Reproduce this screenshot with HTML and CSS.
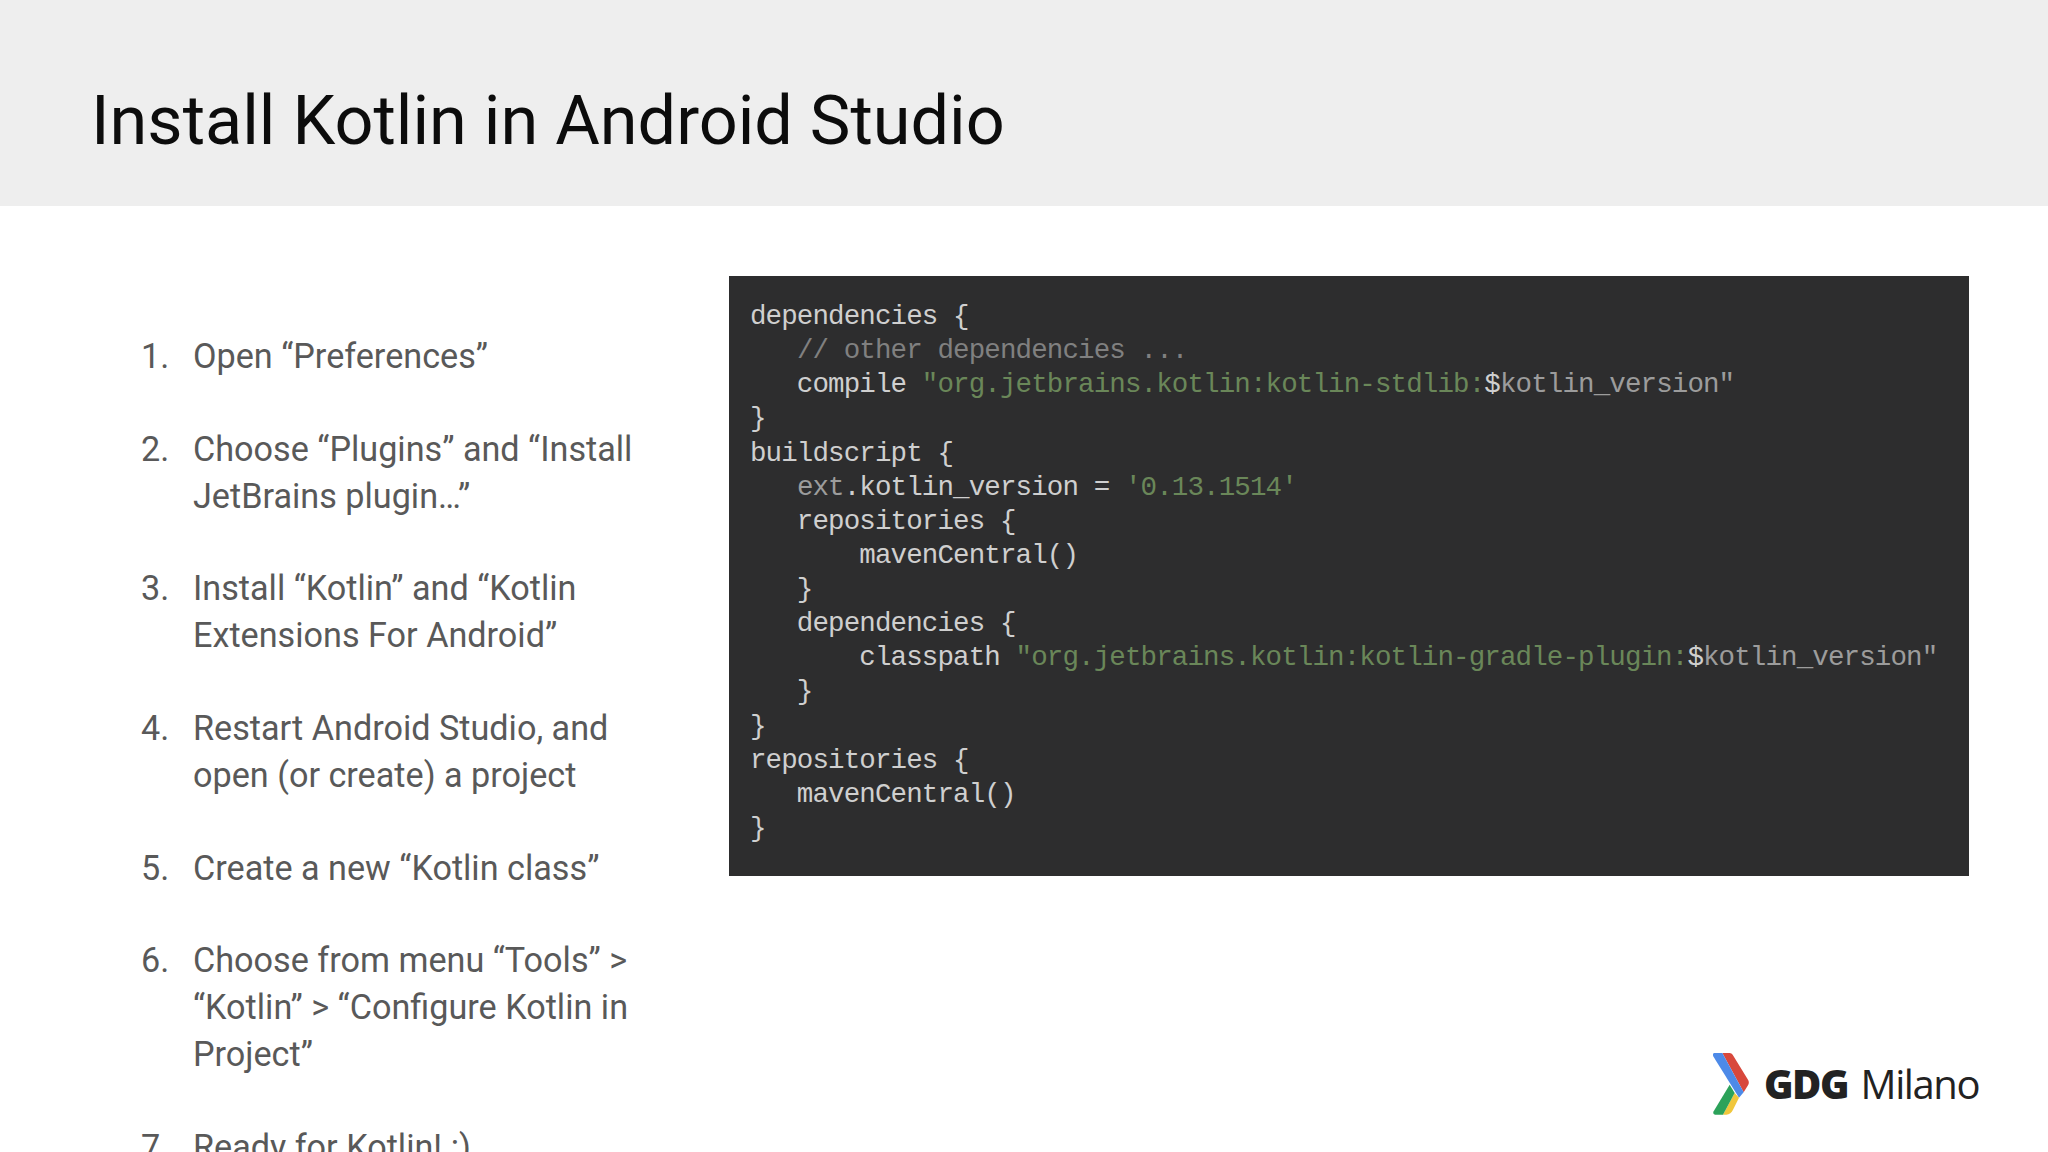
FILE: index.html
```html
<!DOCTYPE html>
<html lang="en">
<head>
  <meta charset="UTF-8">
  <meta name="viewport" content="width=device-width, initial-scale=1.0">
  <title>Install Kotlin in Android Studio</title>
  <link rel="stylesheet" href="styles.css">
</head>
<body>
  <header class="slide-header">
    <h1>Install Kotlin in Android Studio</h1>
  </header>
  <main class="slide-body">
    <ol class="steps">
      <li><span>Open “Preferences”</span></li>
      <li><span>Choose “Plugins” and “Install JetBrains plugin…”</span></li>
      <li><span>Install “Kotlin” and “Kotlin Extensions For Android”</span></li>
      <li><span>Restart Android Studio, and open (or create) a project</span></li>
      <li><span>Create a new “Kotlin class”</span></li>
      <li><span>Choose from menu “Tools” &gt; “Kotlin” &gt; “Configure Kotlin in Project”</span></li>
      <li><span>Ready for Kotlin! :)</span></li>
    </ol>
    <pre class="code">dependencies {
   <span class="comment">// other dependencies ...</span>
   compile <span class="str">"org.jetbrains.kotlin:kotlin-stdlib:</span>$<span class="var">kotlin_version"</span>
}
buildscript {
   <span class="var">ext</span>.kotlin_version = <span class="str">'0.13.1514'</span>
   repositories {
       mavenCentral()
   }
   dependencies {
       classpath <span class="str">"org.jetbrains.kotlin:kotlin-gradle-plugin:</span>$<span class="var">kotlin_version"</span>
   }
}
repositories {
   mavenCentral()
}</pre>
  </main>
  <!-- GDG Milano logo -->
  <div class="logo">
    <svg class="logo-mark" viewBox="0 0 108 186" width="36" height="62">
      <path fill="#d8483c" d="M28 0H50Q56 0 59 5L105 80Q110 88 105 97L92 118L28 0Z"/>
      <path fill="#4d8ae8" d="M3 0H28L92 118L78 134L2 12Q-3 3 3 0Z"/>
      <path fill="#f0c73c" d="M65 120L78 134L60 170Q54 183 40 185H30Z"/>
      <path fill="#2ca25a" d="M50 95L65 120L30 185H6Q-2 184 2 175Z"/>
    </svg>
    <div class="logo-text"><b>GDG</b> Milano</div>
  </div>
</body>
</html>
```

FILE: styles.css
```css
/* Basic reset */
* { margin: 0; padding: 0; box-sizing: border-box; }
html, body { height: 100%; overflow: hidden; background: #fff; }
body { font-family: Roboto, sans-serif; position: relative; }

/* Title band */
.slide-header {
  height: 206px;
  background: #eeeeee;
  padding: 79px 0 0 91px;
}
.slide-header h1 {
  font-size: 68.4px;
  line-height: 85px;
  font-weight: 400;
  color: #0c0c0c;
}

.slide-body {
  display: flex;
  align-items: flex-start;
  height: 946px;
  overflow: hidden;
}

/* Numbered steps */
.steps {
  list-style: none;
  counter-reset: step;
  width: 729px;
  padding: 127px 80px 0 141px;
  flex-shrink: 0;
  font-size: 34.2px;
  line-height: 47px;
  color: #595959;
}
.steps li {
  counter-increment: step;
  display: grid;
  grid-template-columns: 52px 1fr;
  margin-bottom: 45.7px;
}
.steps li::before { content: counter(step) "."; }

/* Code block */
.code {
  width: 1240px;
  height: 600px;
  margin-top: 70px;
  padding: 24px 0 0 21px;
  background: #2d2d2e;
  color: #cfcfcf;
  font-family: "Liberation Mono", monospace;
  font-size: 27.5px;
  letter-spacing: -0.88px;
  line-height: 34.13px;
}
.comment { color: #808080; }
.str { color: #6a8759; }
.var { color: #9c9c9c; }

/* Logo, sits over the slide corner */
.logo {
  position: absolute;
  left: 1713px;
  top: 1053px;
  display: flex;
  align-items: center;
  gap: 15px;
}
.logo-mark { display: block; }
.logo-text {
  font-family: "Open Sans", sans-serif;
  font-size: 40px;
  letter-spacing: -1.4px;
  word-spacing: 3.5px;
  color: #222;
  margin-top: -2px;
}
.logo-text b { font-weight: 800; letter-spacing: -1.5px; }
```
